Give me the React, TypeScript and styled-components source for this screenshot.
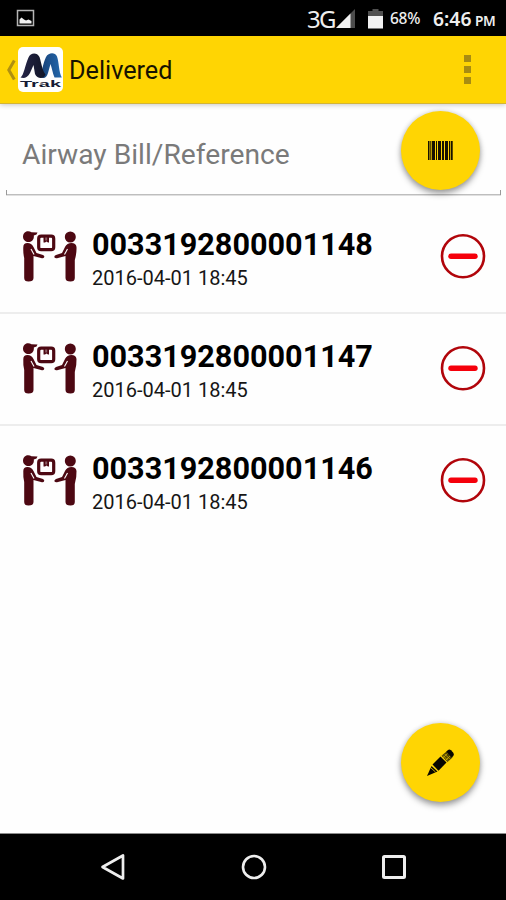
import React from 'react';
import styled, { createGlobalStyle } from 'styled-components';

const GlobalStyle = createGlobalStyle`
  * { box-sizing: border-box; }
  body { margin: 0; background: #fefefe; font-family: Roboto, sans-serif; color: #000; }
  svg { display: block; flex: none; }
`;

const Screen = styled.div`
  position: relative;
  display: flex;
  flex-direction: column;
  width: 506px;
  height: 900px;
  overflow: hidden;
  background: #fefefe;
`;

const StatusBar = styled.header`
  display: flex;
  align-items: center;
  flex: none;
  height: 36px;
  padding: 0 10px 0 16px;
  background: #000;
  color: #eee;
`;

const StatusText = styled.span<{ $size: number; $width: number; $left?: number; $weight?: number; $drop?: number; $tracking?: number }>`
  width: ${p => p.$width}px;
  margin-left: ${p => p.$left ?? 0}px;
  padding-top: ${p => p.$drop ?? 0}px;
  font-family: "Noto Sans", sans-serif;
  font-size: ${p => p.$size}px;
  font-weight: ${p => p.$weight ?? 500};
  letter-spacing: ${p => p.$tracking ?? 0}px;
  line-height: 36px;
  height: 36px;
  white-space: nowrap;
`;

const SignalGroup = styled.div`
  display: flex;
  align-items: center;
  gap: 12px;
  padding-top: 1px;
`;

const Spacer = styled.div`
  flex: 1;
`;

const AppBar = styled.div`
  display: flex;
  align-items: center;
  flex: none;
  height: 68px;
  padding: 0 35px 0 6px;
  background: #ffd503;
  border-bottom: 1px solid #d3b434;
  box-shadow: 0 1px 5px rgba(0, 0, 0, 0.22);
  z-index: 1;
`;

const Title = styled.h1`
  margin: 0 0 0 5px;
  padding-top: 2px;
  font-size: 25.2px;
  font-weight: 400;
  line-height: 34px;
  color: #171300;
`;

const Overflow = styled.div`
  display: grid;
  gap: 4px;
  width: 7px;
`;

const Dot = styled.i`
  width: 7px;
  height: 7px;
  background: #a88c12;
`;

const SearchField = styled.div`
  display: flex;
  flex: none;
  justify-content: space-between;
  height: 92px;
  margin: 0 5px 0 6px;
  padding: 7px 21px 0 16px;
  background: linear-gradient(#999, #999) left bottom / 1px 5px no-repeat,
    linear-gradient(#999, #999) right bottom / 1px 5px no-repeat,
    linear-gradient(#bebebe, #bebebe) bottom / 100% 1px no-repeat;
  border-bottom: 1px solid #e0e0e0;
  background-clip: padding-box;
  background-origin: padding-box;
`;

const Placeholder = styled.span`
  padding-top: 24px;
  font-size: 28.2px;
  line-height: 39px;
  color: #7a7a7a;
`;

const Fab = styled.button`
  display: flex;
  align-items: center;
  justify-content: center;
  flex: none;
  width: 79px;
  height: 79px;
  padding: 0;
  border: 0;
  border-radius: 50%;
  background: #ffd503;
  box-shadow: 0 4px 6px rgba(0, 0, 0, 0.34), 0 0 5px rgba(0, 0, 0, 0.16);
`;

const EditFab = styled(Fab)`
  position: absolute;
  right: 26px;
  bottom: 98px;
`;

const List = styled.main`
  flex: 1;
  padding-top: 5px;
`;

const Row = styled.article`
  display: flex;
  height: 112px;
  padding: 0 20px 0 22px;
  & + & {
    box-shadow: 0 -1px 0 #ededed, inset 0 1px 0 #ededed;
  }
`;

const RowText = styled.div`
  flex: 1;
  padding: 25px 0 0 14px;
`;

const Reference = styled.div`
  font-size: 30.6px;
  font-weight: 700;
  line-height: 38px;
`;

const Timestamp = styled.div`
  font-size: 20px;
  line-height: 29px;
  color: #161616;
`;

const IconSlot = styled.div<{ $top: number }>`
  padding-top: ${p => p.$top}px;
`;

const NavBar = styled.nav`
  display: flex;
  align-items: center;
  flex: none;
  height: 67px;
  padding: 0 99px 0 100px;
  justify-content: space-between;
  border-top: 1px solid #8c8c8c;
  background: #000;
`;

const PictureIcon = () => (
  <svg width="19" height="18" viewBox="0 0 19 18">
    <rect x="1.5" y="1.5" width="16" height="15" fill="none" stroke="#b5b5b5" strokeWidth="1.5" />
    <path d="M3.5 14.5V10.5L5.500 8.500L8 10.500L10 11.500L12.500 10.500L15.500 12V14.500Z" fill="#f2f2f2" />
  </svg>
);

const SignalIcon = () => (
  <svg width="20" height="20" viewBox="0 0 20 20">
    <path d="M0 19L19 0V19Z" fill="#4c4c4c" />
    <path d="M0 19L14.5 4.5V19Z" fill="#f2f2f2" />
  </svg>
);

const BatteryIcon = () => (
  <svg width="15" height="20" viewBox="0 0 15 20">
    <path d="M0 2H4.5V0H10.5V2H15V7H0Z" fill="#505050" />
    <path d="M0 7H15V19.5H0Z" fill="#f2f2f2" />
  </svg>
);

const BackChevron = () => (
  <svg width="11" height="22" viewBox="0 0 11 22">
    <path d="M8.300 1.500L2.800 11L8.300 20.500" fill="none" stroke="#b09010" strokeWidth="3" />
  </svg>
);

const Logo = () => (
  <svg width="47" height="46" viewBox="0 0 47 46">
    <defs>
      <linearGradient id="navy" x1="0" x2="1">
        <stop offset="0" stopColor="#252548" />
        <stop offset="1" stopColor="#101426" />
      </linearGradient>
      <linearGradient id="blue" x1="0" x2="1">
        <stop offset="0" stopColor="#173f75" />
        <stop offset="1" stopColor="#2469ad" />
      </linearGradient>
    </defs>
    <rect x="1" y="0" width="45" height="45" rx="5" fill="#fefefe" />
    <path d="M23 30C25 25 26 16 29 10C31.500 5.500 38 5 40 9.500C42 15 41.800 25 44.800 30.500H37.500C35.500 26 35 21 33.500 17L31 26C29.500 31 27 32 23 30Z" fill="url(#blue)" />
    <path d="M3.500 30.500C7 28 8 18 11.500 10.500C13.500 5.500 20 5 22.500 10C24.500 16 25 23 28.500 27.500C27 32.500 20 32 18 27L16.500 18L13 26C10.500 31 7 31.500 3.500 30.500Z" fill="url(#navy)" />
    <text x="3" y="39.500" textLength="41" lengthAdjust="spacingAndGlyphs" fontFamily="Liberation Sans, sans-serif" fontWeight="700" fontSize="8.500" fill="#161b34">Trak</text>
  </svg>
);

const BarcodeIcon = () => (
  <svg width="25" height="19" viewBox="0 0 25 19" fill="#171200">
    <path d="M0 0h1.500v19H0zM2.300 0h1v19H2.300zM4 0h3v19H4zM8 0h1v19H8zM10 0h3v19h-3zM14 0h2v19h-2zM17 0h3v19h-3zM21 0h1v19h-1zM22.700 0h2v19h-2z" />
  </svg>
);

const PencilIcon = () => (
  <svg width="29" height="28" viewBox="0 0 29 28">
    <path d="M1 27L5.500 17L11.500 22.500Z" fill="#080600" />
    <path d="M4.500 18.500L9.500 23" stroke="#ffd503" strokeWidth="0.800" />
    <path d="M6.500 15.500L14.500 7.500L20.500 13.500L12.500 21.800Z" fill="#080600" />
    <path d="M15.500 6.800L20.500 2.500L26.500 8.500L21.500 13Z" fill="#4d4100" />
    <path d="M17 6.500L22 11.500M18.700 5L23.700 10M16.700 9L21.500 4.500M19.500 11.500L24 7" stroke="#d0ae04" strokeWidth="0.800" />
    <path d="M20.200 2.800L22 1Q23.500 0 25 1.300L27.300 3.700Q28.500 5.500 27.300 7L25.800 8.500Z" fill="#080600" />
  </svg>
);

const HandoverIcon = () => (
  <svg width="56" height="52" viewBox="0 0 56 52" fill="#4d0812">
    <path d="M1 5.500C1.500 -0.500 7 -0.500 9.500 1.300L15.500 1.500L14.500 3.500L11.800 4.500C12.800 13 1 13 1 5.500Z" />
    <path d="M1.300 16Q1.300 12 5.500 12Q9.500 12 11.500 16L14.500 22L21 24Q23 25 22 26.500Q21.500 27.600 19 27L11.500 25V47Q11.500 50.500 6.500 50.500Q2.200 50.500 2.200 47V27Q1 22 1.300 16Z" />
    <path d="M9 18L12 23.500" stroke="#fefefe" strokeWidth="1.100" />
    <rect x="16.700" y="5.200" width="15" height="13.500" rx="2.500" fill="#fefefe" stroke="#4d0812" strokeWidth="3.200" />
    <path d="M21.500 5V11.500H23L24.500 10.500L26 11.500H27V5Z" />
    <path d="M23.200 6.500H25.200V9.500H23.200Z" fill="#fefefe" opacity="0.350" />
    <circle cx="48.300" cy="6" r="5.500" />
    <path d="M54.500 16Q54 12 49.500 12Q45 12 43 16L40 22L34 24Q31.800 25 32.500 26.500Q33.500 27.800 36 27L43.500 25V47Q43.500 50.500 48.500 50.500Q52.800 50.500 52.800 47V29Q54.800 22 54.500 16Z" />
    <path d="M45.500 18L42.500 23.500" stroke="#fefefe" strokeWidth="1.100" />
  </svg>
);

const RemoveIcon = () => (
  <svg width="46" height="46" viewBox="0 0 46 46">
    <circle cx="23" cy="23.300" r="21" fill="none" stroke="#b1050b" strokeWidth="2.600" />
    <path d="M11 23.300H35" stroke="#f5000b" strokeWidth="5.400" strokeLinecap="round" />
  </svg>
);

const BackIcon = () => (
  <svg width="26" height="28" viewBox="0 0 26 28">
    <path d="M2.500 14L23 2.500V25.500Z" fill="none" stroke="#eee" strokeWidth="2.700" strokeLinejoin="round" />
  </svg>
);

const HomeIcon = () => (
  <svg width="26" height="26" viewBox="0 0 26 26">
    <circle cx="13" cy="13" r="11" fill="none" stroke="#eee" strokeWidth="2.600" />
  </svg>
);

const RecentsIcon = () => (
  <svg width="26" height="26" viewBox="0 0 26 26">
    <rect x="2.500" y="2.500" width="21" height="21" rx="1" fill="none" stroke="#eee" strokeWidth="3" />
  </svg>
);

const deliveries = [
  { reference: '0033192800001148', time: '2016-04-01 18:45' },
  { reference: '0033192800001147', time: '2016-04-01 18:45' },
  { reference: '0033192800001146', time: '2016-04-01 18:45' },
];

export default function App() {
  return (
    <>
      <GlobalStyle />
      <Screen>
        <StatusBar>
          <PictureIcon />
          <Spacer />
          <StatusText $size={24} $width={29} $weight={400} $tracking={-1.8} $drop={1}>3G</StatusText>
          <SignalGroup>
            <SignalIcon />
            <BatteryIcon />
          </SignalGroup>
          <StatusText $size={15.5} $width={34} $left={7} $tracking={-0.3}>68%</StatusText>
          <StatusText $size={19.3} $width={39} $left={9} $weight={600} $drop={1}>6:46</StatusText>
          <StatusText $size={13.7} $width={21} $left={3} $weight={600} $drop={3} $tracking={-0.3}>PM</StatusText>
        </StatusBar>
        <AppBar>
          <BackChevron />
          <Logo />
          <Title>Delivered</Title>
          <Spacer />
          <Overflow><Dot /><Dot /><Dot /></Overflow>
        </AppBar>
        <SearchField>
          <Placeholder>Airway Bill/Reference</Placeholder>
          <Fab aria-label="Scan barcode"><BarcodeIcon /></Fab>
        </SearchField>
        <List>
          {deliveries.map(d => (
            <Row key={d.reference}>
              <IconSlot $top={30}><HandoverIcon /></IconSlot>
              <RowText>
                <Reference>{d.reference}</Reference>
                <Timestamp>{d.time}</Timestamp>
              </RowText>
              <IconSlot $top={32}><RemoveIcon /></IconSlot>
            </Row>
          ))}
        </List>
        <EditFab aria-label="Edit"><PencilIcon /></EditFab>
        <NavBar>
          <BackIcon />
          <HomeIcon />
          <RecentsIcon />
        </NavBar>
      </Screen>
    </>
  );
}
